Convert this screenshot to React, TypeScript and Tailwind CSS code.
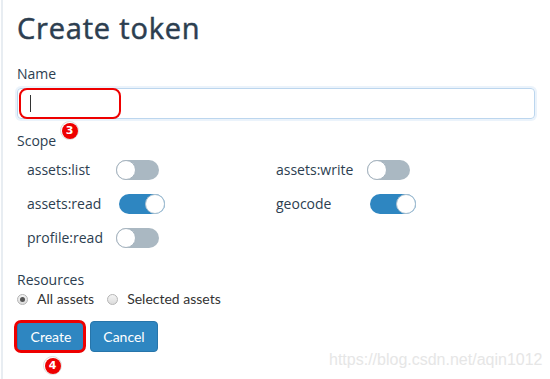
import React from "react";

const sans = { fontFamily: '"Open Sans", "Noto Sans", sans-serif' };
const lato = { fontFamily: 'Lato, "Open Sans", sans-serif' };

function Toggle({ on }: { on: boolean }) {
  return on ? (
    <div className="ml-[3px] flex h-[20px] w-[46px] items-center justify-end rounded-full bg-[#2e86c1]">
      <div className="h-[20px] w-[20px] rounded-full border border-[#a9bfcf] bg-white" />
    </div>
  ) : (
    <div className="flex h-[20px] w-[43px] items-center justify-start rounded-full bg-[#aab8c2]">
      <div className="h-[20px] w-[20px] rounded-full border border-[#a6b4bf] bg-white" />
    </div>
  );
}

function Cell({ label, on, wide }: { label: string; on: boolean; wide?: boolean }) {
  return (
    <div className="flex h-[20px] items-center">
      <span className={wide ? "w-[91px] text-[14px] leading-[20px] text-[#2c3e50]" : "w-[89px] text-[14px] leading-[20px] text-[#2c3e50]"}>
        {label}
      </span>
      <Toggle on={on} />
    </div>
  );
}

function Radio({ checked }: { checked: boolean }) {
  return (
    <span className="flex h-[11px] w-[11px] items-center justify-center rounded-full border border-[#b5b5b5] bg-gradient-to-b from-[#f4f4f4] to-[#dcdcdc]">
      {checked && <span className="h-[5px] w-[5px] rounded-full bg-[#555]" />}
    </span>
  );
}

function Badge({ n }: { n: string }) {
  return (
    <div className="flex h-[19px] w-[19px] items-center justify-center rounded-full border border-[#dddddd] bg-white">
      <div className="flex h-[16px] w-[16px] items-center justify-center rounded-full bg-[#ee0000] text-[11px] font-bold leading-none text-white" style={{ fontFamily: '"DejaVu Sans", sans-serif' }}>
        {n}
      </div>
    </div>
  );
}

export default function App() {
  return (
    <div className="relative h-[379px] w-[550px] overflow-hidden bg-white" style={sans}>
      <div className="absolute left-[1px] top-0 h-full w-[2px] bg-[#e8edf2]" />
      <div className="flex flex-col pl-[17px] pt-[12px]">
        <h1 className="text-[29px] leading-[32px] tracking-[0.8px] text-[#2c3e50] [-webkit-text-stroke:0.5px_#2c3e50]">Create token</h1>
        <div className="mt-[20px] text-[14px] leading-[20px] text-[#2c3e50]">Name</div>
        <div className="mt-[4px] flex h-[31px] w-[518px] items-center rounded-[4px] border border-[#bcd6ee] px-[12px] shadow-[0_0_0_2px_rgba(210,228,246,0.45)]">
          <span className="h-[17px] w-[1px] bg-[#333]" />
        </div>
        <div className="mt-[12px] text-[14px] leading-[20px] text-[#2c3e50]">Scope</div>
        <div className="mt-[9px] grid grid-cols-[249px_249px] gap-y-[14px] pl-[10px]">
          <Cell label="assets:list" on={false} />
          <Cell label="assets:write" on={false} wide />
          <Cell label="assets:read" on={true} />
          <Cell label="geocode" on={true} wide />
          <Cell label="profile:read" on={false} />
        </div>
        <div className="mt-[23px] text-[14px] leading-[18px] text-[#2c3e50]">Resources</div>
        <div className="flex h-[20px] items-center text-[14px] leading-[20px] text-[#333]" style={lato}>
          <Radio checked />
          <span className="ml-[9px]">All assets</span>
          <span className="ml-[13px]"><Radio checked={false} /></span>
          <span className="ml-[9px]">Selected assets</span>
        </div>
        <div className="mt-[12px] flex gap-[5px]" style={lato}>
          <button className="h-[31px] w-[68px] rounded-[4px] border border-[#2775aa] bg-[#2e86c1] text-[14px] text-white">Create</button>
          <button className="h-[31px] w-[68px] rounded-[4px] border border-[#2775aa] bg-[#2e86c1] text-[14px] text-white">Cancel</button>
        </div>
      </div>

      {/* annotations */}
      <div className="absolute left-[19px] top-[88px] h-[31px] w-[102px] rounded-[8px] border-2 border-[#ee0000]" />
      <div className="absolute left-[60px] top-[121px]"><Badge n="3" /></div>
      <div className="absolute left-[14px] top-[320px] h-[33px] w-[72px] rounded-[7px] border-[3px] border-[#ee0000]" />
      <div className="absolute left-[43px] top-[356px]"><Badge n="4" /></div>
      <div className="absolute left-[329px] top-[351px] text-[16px] leading-[18px] text-[#e6e6e6]" style={{ fontFamily: '"Liberation Sans", Arial, sans-serif' }}>
        https://blog.csdn.net/aqin1012
      </div>
    </div>
  );
}
